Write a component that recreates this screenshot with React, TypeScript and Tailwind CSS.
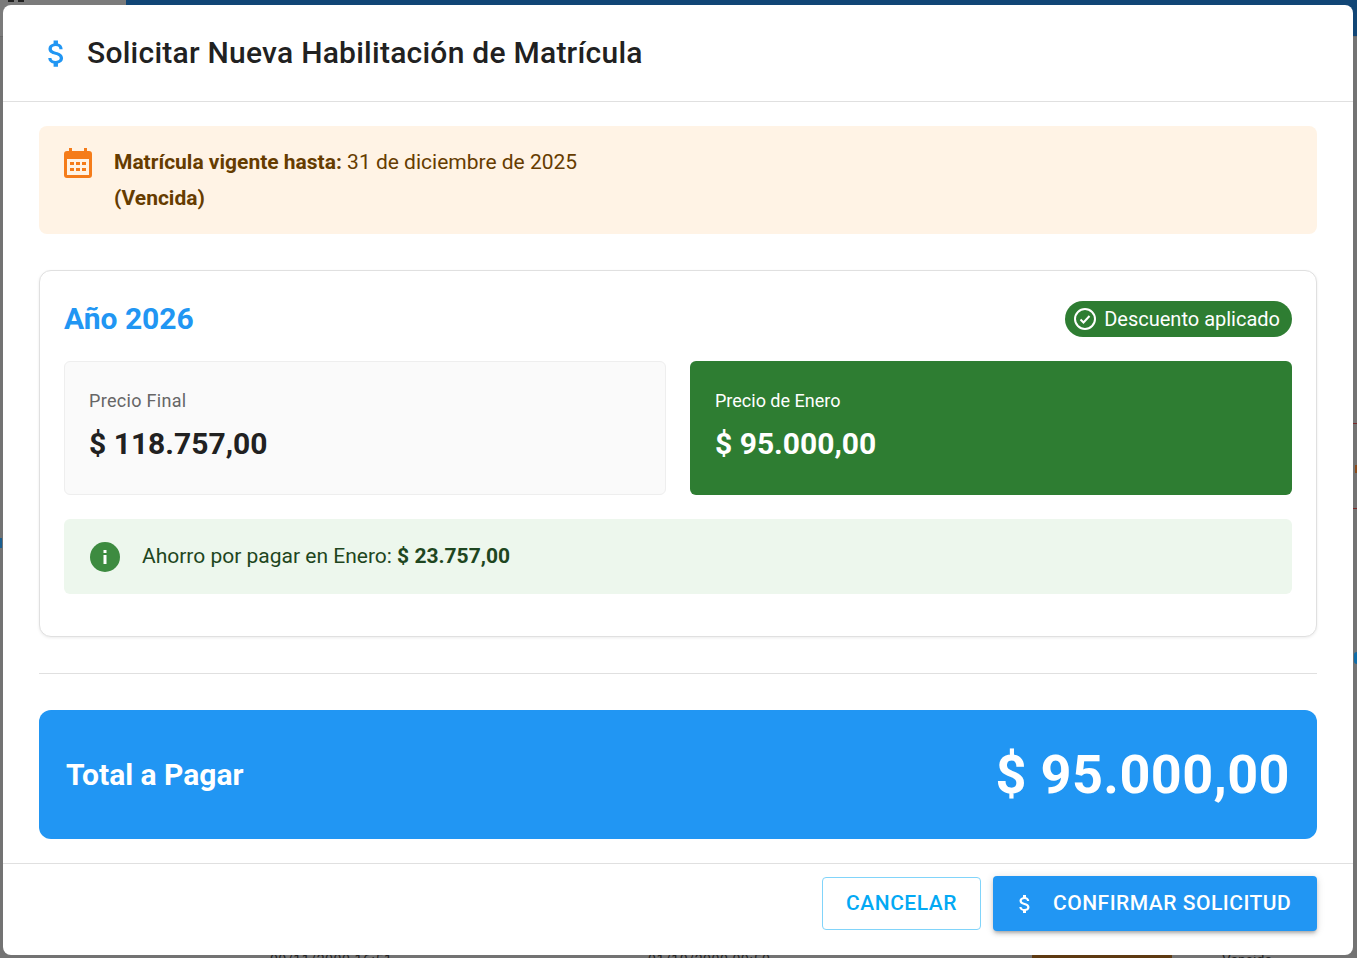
import React from "react";

const Dollar = ({ className }: { className: string }) => (
  <svg viewBox="0 0 24 24" className={className} fill="currentColor">
    <path d="M11.8 10.9c-2.27-.59-3-1.2-3-2.15 0-1.09 1.01-1.85 2.7-1.85 1.78 0 2.44.85 2.5 2.1h2.21c-.07-1.72-1.12-3.3-3.21-3.81V3h-3v2.16c-1.94.42-3.5 1.68-3.5 3.61 0 2.31 1.91 3.46 4.7 4.13 2.5.6 3 1.48 3 2.41 0 .69-.49 1.79-2.7 1.79-2.06 0-2.87-.92-2.98-2.1h-2.2c.12 2.19 1.76 3.42 3.68 3.83V21h3v-2.15c1.95-.37 3.5-1.5 3.5-3.55 0-2.84-2.43-3.81-4.7-4.4z" />
  </svg>
);

export default function App() {
  return (
    <div className="relative h-[958px] w-[1357px] overflow-hidden bg-[#737373] font-['Roboto',sans-serif]">
      <div className="absolute left-[126px] right-0 top-0 h-[36px] bg-[#114676]" />
      <div className="absolute left-0 top-0 h-[36px] w-[126px] bg-[#7b7b7b]" />
      <div className="absolute left-0 right-0 top-[36px] h-px bg-[#6a6a6a]" />
      <div className="absolute left-[8px] top-[-1px] flex gap-[4px]">
        <div className="h-[3px] w-[6px] bg-[#222]" />
        <div className="h-[3px] w-[6px] bg-[#222]" />
      </div>
      <div className="absolute left-[270px] top-[950px] text-[14px] tracking-[0.6px] text-[#222]">09/11/2000 16:51</div>
      <div className="absolute left-[648px] top-[950px] text-[14px] tracking-[0.6px] text-[#222]">01/10/2000 09:50</div>
      <div className="absolute left-[1032px] top-[952px] h-[8px] w-[140px] rounded-t-[4px] bg-[#5e3a12]" />
      <div className="absolute left-[1222px] top-[950px] text-[14px] text-[#222]">Vencida</div>
      <div className="absolute right-0 top-[423px] h-px w-[4px] bg-[#7a2a2a]" />
      <div className="absolute right-0 top-[508px] h-px w-[4px] bg-[#7a2a2a]" />
      <div className="absolute right-0 top-[465px] h-[8px] w-[2px] bg-[#8a4a1a]" />
      <div className="absolute right-0 top-[652px] h-[12px] w-[3px] rounded-l-full bg-[#0f6ca8]" />
      <div className="absolute left-0 top-[538px] h-[10px] w-[2px] bg-[#1a5f90]" />

      <div className="absolute left-[3px] top-[5px] flex h-[950px] w-[1350px] flex-col rounded-[8px] bg-white">
        <header className="flex h-[97px] shrink-0 items-center border-b border-[#e0e0e0] pl-[36px]">
          <Dollar className="h-[35px] w-[35px] text-[#2196f3]" />
          <h1 className="ml-[13px] text-[30px] font-medium leading-[36px] tracking-[0.25px] text-[#212121]">
            Solicitar Nueva Habilitación de Matrícula
          </h1>
        </header>

        <main className="flex flex-1 flex-col px-[36px] pt-[24px]">
          <section className="flex h-[108px] shrink-0 rounded-[8px] bg-[#fff3e5] pl-[25px] pt-[18px] text-[#663c00]">
            <svg viewBox="0 0 28 30" className="mt-[4px] h-[30px] w-[28px]" fill="#f57c1a">
              <path d="M5 0h3v3h12V0h3v3h2a3 3 0 0 1 3 3v21a3 3 0 0 1-3 3H3a3 3 0 0 1-3-3V6a3 3 0 0 1 3-3h2z" />
              <rect x="3" y="11" width="22" height="16" fill="#fff3e5" />
              <path d="M6 14h4v3H6zM12 14h4v3h-4zM18 14h4v3h-4zM6 20h4v3H6zM12 20h4v3h-4zM18 20h4v3h-4z" />
            </svg>
            <div className="ml-[22px] text-[21px] leading-[36px]">
              <div>
                <strong className="font-bold">Matrícula vigente hasta:</strong> 31 de diciembre de 2025
              </div>
              <div className="font-bold">(Vencida)</div>
            </div>
          </section>

          <section className="mt-[36px] h-[367px] shrink-0 rounded-[12px] border border-[#e0e0e0] bg-white p-[24px] shadow-[0_1px_3px_rgba(0,0,0,0.08)]">
            <div className="flex h-[36px] items-center justify-between pt-[0px] mt-[6px]">
              <h2 className="text-[30px] font-bold leading-[36px] text-[#2196f3]">Año 2026</h2>
              <span className="flex h-[36px] items-center rounded-full bg-[#2e7d32] pl-[8px] pr-[12px] text-[20px] text-white">
                <svg viewBox="0 0 24 24" className="mr-[7px] h-[24px] w-[24px]" fill="none" stroke="#fff" strokeWidth="2">
                  <circle cx="12" cy="12" r="10" />
                  <path d="M7.5 12.5l3 3 6-6.5" />
                </svg>
                Descuento aplicado
              </span>
            </div>

            <div className="mt-[24px] grid grid-cols-2 gap-[24px]">
              <div className="h-[134px] rounded-[6px] border border-[#eeeeee] bg-[#fafafa] px-[24px] pt-[25px]">
                <div className="text-[18px] leading-[27px] tracking-[0.3px] text-[#666666]">Precio Final</div>
                <div className="mt-[12px] text-[30px] font-bold leading-[36px] text-[#212121]">$ 118.757,00</div>
              </div>
              <div className="h-[134px] rounded-[6px] bg-[#2e7d32] px-[25px] pt-[26px] text-white">
                <div className="text-[18px] leading-[27px]">Precio de Enero</div>
                <div className="mt-[12px] text-[30px] font-bold leading-[36px]">$ 95.000,00</div>
              </div>
            </div>

            <div className="mt-[24px] flex h-[75px] items-center rounded-[6px] bg-[#edf7ed] pl-[26px] text-[21px] text-[#1e4620]">
              <svg viewBox="0 0 30 30" className="h-[30px] w-[30px]">
                <circle cx="15" cy="15" r="15" fill="#3d8b40" />
                <rect x="13.5" y="13" width="3" height="9" fill="#fff" />
                <rect x="13.5" y="8" width="3" height="3" fill="#fff" />
              </svg>
              <span className="ml-[22px]">
                Ahorro por pagar en Enero: <strong className="font-bold">$ 23.757,00</strong>
              </span>
            </div>
          </section>

          <hr className="mt-[36px] shrink-0 border-t border-[#e0e0e0]" />

          <section className="mt-[36px] flex h-[129px] shrink-0 items-center justify-between rounded-[12px] bg-[#2196f3] px-[27px] text-white">
            <div className="text-[30px] font-bold">Total a Pagar</div>
            <div className="text-[54px] font-bold leading-[64px] tracking-[0.4px]">$ 95.000,00</div>
          </section>
        </main>

        <footer className="flex h-[92px] shrink-0 items-start justify-end gap-[12px] border-t border-[#e0e0e0] pr-[36px] pt-[12px]">
          <button className="mt-[1px] h-[53px] w-[159px] rounded-[4px] border border-[#81d4fa] text-[21px] font-medium tracking-[0.5px] text-[#03a9f4]">
            CANCELAR
          </button>
          <button className="flex h-[55px] w-[324px] items-center rounded-[4px] bg-[#2196f3] pl-[20px] text-[21px] font-medium tracking-[0.5px] text-white shadow-[0_3px_3px_-2px_rgba(0,0,0,0.2),0_3px_4px_0_rgba(0,0,0,0.14),0_1px_8px_0_rgba(0,0,0,0.12)]">
            <Dollar className="h-[24px] w-[24px]" />
            <span className="ml-[16px]">CONFIRMAR SOLICITUD</span>
          </button>
        </footer>
      </div>
    </div>
  );
}
